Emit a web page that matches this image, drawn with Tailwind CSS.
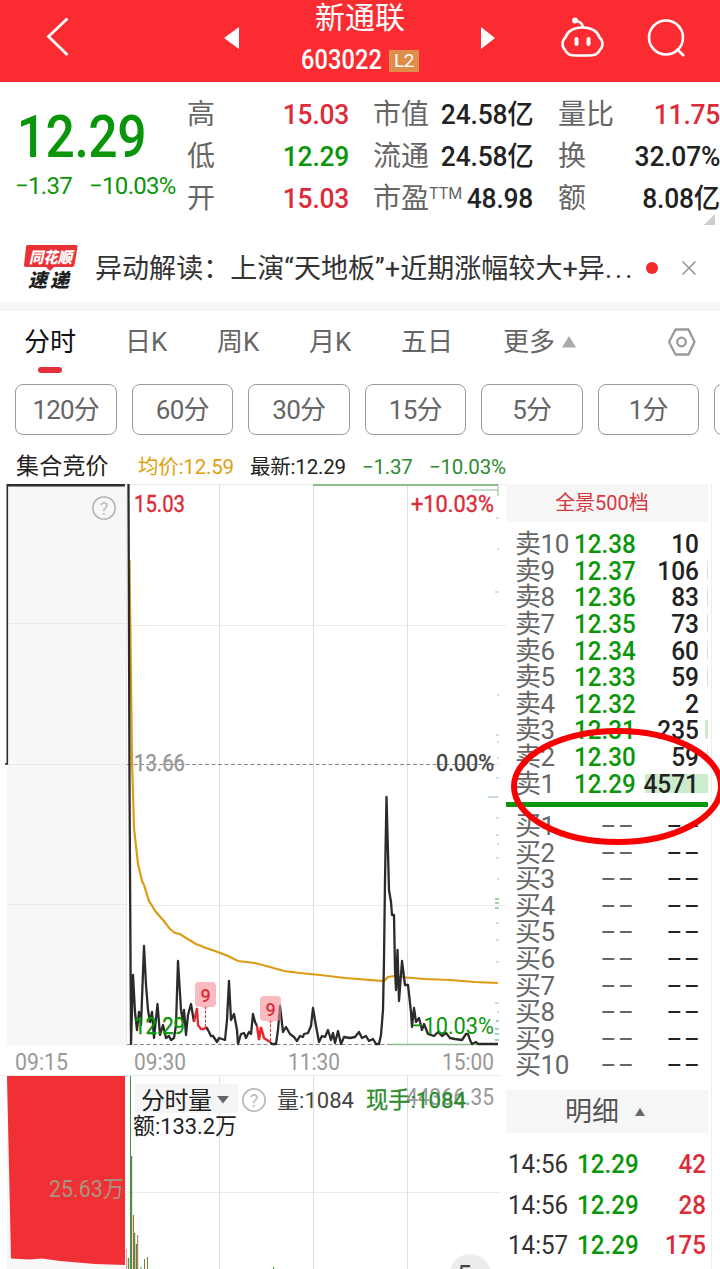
<!DOCTYPE html>
<html lang="zh-CN">
<head>
    <meta charset="UTF-8">
    <meta name="viewport" content="width=device-width, initial-scale=1.0">
    <title>新通联 603022</title>
    <script src="https://cdn.jsdelivr.net/npm/@tailwindcss/browser@4"></script>
</head>
<body class="bg-white font-['Roboto','Noto_Sans_CJK_SC',sans-serif] text-[#333]">
<div class="relative w-[720px] h-[1269px] overflow-hidden flex flex-col">

    <!-- Header -->
    <header class="h-[82px] shrink-0 bg-[#fa2c32] text-white flex items-start">
        <svg class="w-[222px] h-[82px]" viewBox="0 0 222 82" fill="none" stroke="#fff" stroke-width="2.8"><path d="M67.500 18.500L48.500 36.500L67.500 55"/></svg>
        <svg class="w-[18px] h-[82px]" viewBox="0 0 18 82"><path d="M17 27V49L2 38Z" fill="#fff"/></svg>
        <div class="w-[240px] h-[82px] flex flex-col items-center">
            <h1 class="h-[36px] leading-[35px] text-[30px]">新通联</h1>
            <div class="h-[46px] flex items-center pt-[3px]">
                <span class="w-[88px] text-[27px] font-medium tracking-[0.2px] origin-left scale-x-[0.87]">603022</span>
                <span class="w-[30px] h-[22px] leading-[22px] bg-[#e08c4b] text-[19px] text-center tracking-[-0.5px]">L2</span>
            </div>
        </div>
        <svg class="w-[16px] h-[82px]" viewBox="0 0 16 82"><path d="M1 27V49L15 38Z" fill="#fff"/></svg>
        <svg class="w-[224px] h-[82px]" viewBox="496 0 224 82" fill="none" stroke="#fff" stroke-width="2.600">
            <path d="M582.500 27.500C573 27.500 567 32 565.500 37.500C562 40 561.500 46.500 564.500 49C567 54.500 570 55.500 576 55.500H588C595 55.500 598 54.500 600.500 49C603.500 46.500 603 40 599.500 37.500C598 32 592 27.500 582.500 27.500Z"/>
            <path d="M583 27C582 23 579.500 21 575 21"/>
            <circle cx="575" cy="20.500" r="1.600" fill="#fff"/>
            <path d="M576.500 39V44M588.500 39V44" stroke-width="4" stroke-linecap="round"/>
            <circle cx="666" cy="37.500" r="17"/>
            <path d="M677 49L684 56"/>
        </svg>
    </header>

    <!-- Quote -->
    <section class="h-[153px] shrink-0 flex">
        <div class="w-[187px] text-[#0a960a]">
            <div class="mt-[27px] pl-[19px] h-[56px] leading-[56px] text-[59px] font-medium tracking-[-0.5px] origin-left scale-x-[0.875]">12.29</div>
            <div class="mt-[8px] pl-[15px] h-[26px] leading-[26px] text-[24px] flex gap-[17px] tracking-[-0.7px]"><span>−1.37</span><span>−10.03%</span></div>
        </div>
        <div class="w-[533px] pt-[12px] flex text-[28px] leading-[42px]">
            <div id="stats1" class="w-[162px]"></div>
            <div id="stats2" class="w-[160px] ml-[24px]"></div>
            <div id="stats3" class="w-[162px] ml-[25px]"></div>
        </div>
    </section>

    <!-- News -->
    <section class="h-[67px] shrink-0 flex items-center border-b border-[#f6f6f6]">
        <svg class="w-[95px] h-[66px] shrink-0" viewBox="0 236 95 66">
            <path d="M27.500 246H76Q78 246 77.500 248L74.500 266Q74 268 72 268H54L50 272L46 268H26Q23.500 268 24 266L26 248Q26 246 27.500 246Z" fill="#e83238"/>
            <text x="29" y="263.500" font-size="15.500" font-weight="900" font-style="italic" fill="#fff" textLength="43" lengthAdjust="spacingAndGlyphs">同花顺</text>
            <text x="28" y="288" font-size="19" font-weight="900" font-style="italic" fill="#222" textLength="41">速递</text>
        </svg>
        <p class="w-[551px] pt-[2px] text-[27px] tracking-[0.05px] whitespace-nowrap">异动解读：上演“天地板”+近期涨幅较大+异<span class="tracking-[3px]">...</span></p>
        <span class="w-[12px] h-[12px] rounded-full bg-[#f52b2b]"></span>
        <svg class="w-[16px] h-[16px] ml-[23px]" viewBox="0 0 16 16" stroke="#999" stroke-width="1.700"><path d="M1.500 1.500L14.500 14.500M14.500 1.500L1.500 14.500"/></svg>
    </section>
    <div class="h-[8px] shrink-0 bg-[#f5f5f5] mt-[1px]"></div>

    <!-- Tabs -->
    <nav class="h-[73px] shrink-0 flex pl-[24px] pt-[11px] text-[26px] leading-[41px] text-[#666]">
        <div class="w-[101px] text-[#111]">
            分时
            <div class="w-[24px] h-[6px] mt-[4px] ml-[14px] rounded-full bg-[#e5303a]"></div>
        </div>
        <div class="w-[92px]">日K</div>
        <div class="w-[92px]">周K</div>
        <div class="w-[92px]">月K</div>
        <div class="w-[102px]">五日</div>
        <div class="w-[163px] flex">更多
            <svg class="w-[16px] h-[40px] ml-[6px]" viewBox="0 0 16 40"><path d="M1 25.500L8 14L15 25.500Z" fill="#aaa"/></svg>
        </div>
        <svg class="w-[32px] h-[40px]" viewBox="0 0 32 40" fill="none" stroke="#999" stroke-width="2.300" stroke-linejoin="round"><path d="M9.500 7.500H22.500L28.500 20L22.500 32.500H9.500L3 20Z"/><circle cx="15.500" cy="20" r="4.300"/></svg>
    </nav>
    <div id="periods" class="h-[51px] shrink-0 flex gap-[15px] pl-[15px] text-[26px] text-[#666]"></div>

    <!-- Average and last price -->
    <div class="h-[49px] shrink-0 flex items-center pl-[16px] pt-[15px] text-[20.500px] whitespace-nowrap tracking-[-0.2px]">
        <span class="w-[122px] text-[23px] tracking-[0.2px] text-[#222]">集合竞价</span>
        <span class="w-[112px] text-[#e0a010]">均价:12.59</span>
        <span class="w-[112px] text-[#222]">最新:12.29</span>
        <span class="w-[67px] text-[#2c8c2c]">−1.37</span>
        <span class="text-[#2c8c2c]">−10.03%</span>
    </div>

    <main class="flex h-[785px] shrink-0">
        <!-- Time-share chart -->
        <svg class="w-[506px] h-[785px] shrink-0" viewBox="0 484 506 785" fill="none">
            <rect x="7" y="484" width="119" height="561" fill="#f7f7f7"/>
            <path d="M7 623.500H126M7 764.500H126M7 904.500H126" stroke="#eaeaea"/>
            <path d="M126.500 484.500H506M129 625.500H506M129 905.500H506M126.500 484V1045M0 1075.500H500M126 1192.500H500" stroke="#ebebeb"/>
            <path d="M219.500 484V1045M313.500 484V1045M407.500 484V1045M219.500 1076V1269M313.500 1076V1269M407.500 1076V1269" stroke="#dedede"/>
            <path d="M127 764.500H498M127 1044.500H498" stroke="#888" stroke-dasharray="4 2.500"/>
            <path d="M390 1044.500H478" stroke="#8cbd8c" stroke-width="1.500"/>
            <path d="M313 485H498" stroke="#8cbd8c" stroke-width="2"/>
            <path d="M472 490H498M488 797H498M498 485V496" stroke="#8cbd8c"/>
            <path d="M496 518H499M497 549H499M495 592H499M497 695H499M496 735H499M497 742H499M497 758H499M496 778H499M496 818H499M496 835H499M497 844H499M496 858H499M497 879H499M496 923H499M496 940H499M496 962H499M495 1003H499M497 1012H499" stroke="#bbb"/>
            <path d="M495 899H499M495 903H499M495 908H499M496 1021H499M495 1029H499M495 1034H499M495 1040H499" stroke="#9fd4a8" stroke-width="2"/>

            <!-- Price labels under the curve -->
            <g>
                <text x="134" y="512" font-size="24" fill="#dc2c3a" textLength="51" lengthAdjust="spacingAndGlyphs" stroke="#dc2c3a" stroke-width=".4">15.03</text>
                <text x="411" y="512" font-size="24" fill="#dc2c3a" textLength="83" lengthAdjust="spacingAndGlyphs" stroke="#dc2c3a" stroke-width=".4">+10.03%</text>
                <text x="134" y="771" font-size="24" fill="#999" textLength="51" lengthAdjust="spacingAndGlyphs" stroke="#999" stroke-width=".4">13.66</text>
                <text x="436" y="771" font-size="24" fill="#444" textLength="58" lengthAdjust="spacingAndGlyphs" stroke="#444" stroke-width=".4">0.00%</text>
            </g>
            <polyline stroke="#dc9c14" stroke-width="2.200" points="129.500,560 131,680 132,760 134,828 138,864 142,881 144,885 149,901 156,912 163,920 170,929 175,933 180,934 186,938 196,944 206,948 215,951 228,956 238,961 255,963 270,967 284,971 300,973 320,975 345,978 384,981 388,977 394,976 400,977 425,979 450,980 475,982 498,983"/>
            <path d="M125 485.300H7" stroke="#2b2b2b" stroke-width="2.500"/>
            <path d="M7.300 484V764H5" stroke="#2b2b2b" stroke-width="1.600"/>
            <g stroke="#2b2b2b" stroke-width="2.300" stroke-linejoin="round">
                <polyline points="128.500,484 129.500,780 131,1044 133,975 135,1012 137,1030 139,1012 141,1025 144,946 146,985 148,1010 150,1022 152,1012 154,1038 157.500,1004 160,1035 163,1025 166,1038 169,1036 171,1040 174,1038 176,1025 178,961 181,1010 183,1022 184,1010 186,1035 188,1015 191,1004 194,1022"/>
                <polyline points="206,1027 208,1030 211,1036 213,1036 217,1042 219,1038 225,1040 227,1020 229,981 231,1020 234,1014 237,1030 238,1044 241,1034 244,1033 246,1038 249,1032 251,1034 253,1014 255,1022 257,1026"/>
                <polyline points="270,1042 272,1044 276,1044 278,1030 280,1006 283,1032 286,1027 290,1034 294,1037 297,1041 300,1036 303,1037 304,1034 308,1033 311,1026 313,1008 316,1026 319,1042 322,1036 325,1037 328,1030 331,1040 333,1033 335,1043 338,1031 341,1044 344,1037 350,1038 355,1037 359,1032 362,1038 366,1036 369,1041 373,1039 376,1044 379,1044 381,1035 383,1010 384,960 385,880 386.500,797 389,890 391,902 392,915 394,915 395,970 396,990 397.500,950 399,1001 402,961 405,985 408,985 411,1012 412,1027 414,1008 416,1022 419,1018 422,1030 424,1024 428,1034 434,1036 438,1032 442,1036 446,1033 450,1038 455,1039 462,1040 466,1034 468,1034 470,1040 472,1044 476,1042 478,1044 498,1044"/>
            </g>
            <polyline stroke="#e8282f" stroke-width="2.300" points="194,1022 197,1008 198,1025 201,1029 204,1029 206,1027"/>
            <polyline stroke="#e8282f" stroke-width="2.500" points="257,1026 259,1040 261,1027 264,1038 267,1040 270,1042"/>
            <path d="M205.500 1006V1028M270.500 1020V1042" stroke="#d33" stroke-dasharray="3 1.500"/>

            <!-- Nine-turn markers -->
            <path d="M199 982H212Q216 982 216 986V1003Q216 1007 212 1007H209L205.500 1010L202 1007H199Q195 1007 195 1003V986Q195 982 199 982Z" fill="#f58c96" fill-opacity=".6"/>
            <path d="M264 996H277Q281 996 281 1000V1017Q281 1021 277 1021H274L270.500 1024L267 1021H264Q260 1021 260 1017V1000Q260 996 264 996Z" fill="#f58c96" fill-opacity=".6"/>
            <g font-size="18" font-weight="500" fill="#dc2c3a" text-anchor="middle"><text x="205.500" y="1001.500">9</text><text x="270.500" y="1015.500">9</text></g>

            <g font-size="24" fill="#0a960a">
                <text x="134" y="1034" textLength="51" lengthAdjust="spacingAndGlyphs" stroke="#0a960a" stroke-width=".4">12.29</text>
                <text x="411" y="1034" textLength="83" lengthAdjust="spacingAndGlyphs">−10.03%</text>
            </g>
            <g font-size="24" fill="#999">
                <text x="15" y="1070" textLength="53" lengthAdjust="spacingAndGlyphs">09:15</text>
                <text x="134" y="1070" textLength="52" lengthAdjust="spacingAndGlyphs">09:30</text>
                <text x="288" y="1070" textLength="52" lengthAdjust="spacingAndGlyphs">11:30</text>
                <text x="442" y="1070" textLength="52" lengthAdjust="spacingAndGlyphs">15:00</text>
            </g>
            <circle cx="104" cy="508" r="11.200" stroke="#bbb" stroke-width="1.700"/>
            <text x="104" y="514.500" font-size="18" fill="#bbb" text-anchor="middle">?</text>

            <!-- Volume -->
            <rect x="7" y="1076" width="119" height="193" fill="#f7f7f7"/>
            <path d="M7 1076H125V1265L95 1264L60 1261L42 1258.500L30 1259.500L11 1258.500Z" fill="#f03034"/>
            <path d="M126.500 1249V1269" stroke="#f0a0a0"/>
            <path d="M128.500 1258V1269M131.500 1156V1269M134.500 1233V1269M136.500 1244V1269" stroke="#5a8a46" stroke-width="1.400"/>
            <path d="M130.500 1076V1269M147.500 1257V1269M141 1267V1269M273.500 1267V1269" stroke="#3a9a3a"/>
            <path d="M133.500 1215V1269M137.700 1235V1269M144.500 1259V1269" stroke="#b85c40"/>
            <text x="49" y="1197" font-size="23" fill="#a89484" textLength="75" lengthAdjust="spacingAndGlyphs">25.63万</text>
            <rect x="135" y="1084" width="103" height="29" fill="#f6f5f6"/>
            <text x="141" y="1108.500" font-size="24" fill="#222" textLength="71">分时量</text>
            <path d="M217 1096H229L223 1103.500Z" fill="#666"/>
            <circle cx="254" cy="1100" r="11.200" stroke="#bbb" stroke-width="1.700"/>
            <text x="254" y="1106.500" font-size="18" fill="#bbb" text-anchor="middle">?</text>
            <text x="277" y="1108" font-size="22.500" fill="#444" textLength="77" lengthAdjust="spacingAndGlyphs">量:1084</text>
            <text x="406" y="1104.500" font-size="24" fill="#999" textLength="88" lengthAdjust="spacingAndGlyphs">44366.35</text>
            <text x="366" y="1108" font-size="22.500" fill="#2c8c2c" stroke="#2c8c2c" stroke-width=".3" textLength="100" lengthAdjust="spacingAndGlyphs">现手:1084</text>
            <text x="133" y="1133.500" font-size="22.500" fill="#222" textLength="104" lengthAdjust="spacingAndGlyphs">额:133.2万</text>
            <circle cx="470" cy="1275" r="21" fill="#ededed"/>
            <text x="457" y="1284" font-size="26" fill="#444">5</text>
        </svg>

        <!-- Order book -->
        <aside class="w-[206px] h-[785px] border-r border-[#eee]">
            <div class="w-[202px] h-[38px] bg-[#f6f6f6] text-[#d8363f] text-[20px] leading-[39px] text-center pr-[10px]">全景500档</div>
            <div id="sells" class="mt-[9px] w-[202px] h-[267px]"></div>
            <div class="w-[202px] h-[5px] mt-[4px] bg-[#0a960a]"></div>
            <div id="buys" class="mt-[6px] w-[202px] h-[266px]"></div>
            <div class="w-[202px] h-[43px] mt-[11px] bg-[#f6f6f6] text-[#555] text-[27px] flex items-center justify-center pt-[2px] pr-[3px]">
                明细
                <svg class="w-[12px] h-[10px] ml-[15px] mb-[2px]" viewBox="0 0 12 10"><path d="M1 9L6 1L11 9Z" fill="#666"/></svg>
            </div>
            <div id="trades" class="w-[202px] pt-[11px]"></div>
        </aside>
    </main>

    <!-- Corner mark and hand-drawn circle -->
    <svg class="absolute inset-0 w-[720px] h-[1269px]" viewBox="0 0 720 1269" fill="none">
        <path d="M715 214V225H704Z" fill="#ccc"/>
        <ellipse cx="617.500" cy="786.500" rx="103.500" ry="55.500" stroke="#f80000" stroke-width="6"/>
    </svg>
</div>

<script>
    const stats = {
        stats1: [["高", "15.03", "text-[#dc2c3a]"], ["低", "12.29", "text-[#0a960a]"], ["开", "15.03", "text-[#dc2c3a]"]],
        stats2: [["市值", "24.58亿", "text-[#222]"], ["流通", "24.58亿", "text-[#222]"], ["市盈", "48.98", "text-[#222]"]],
        stats3: [["量比", "11.75", "text-[#dc2c3a]"], ["换", "32.07%", "text-[#222]"], ["额", "8.08亿", "text-[#222]"]]
    };
    for (const id in stats) {
        document.getElementById(id).innerHTML = stats[id].map(([label, value, color]) => `
            <div class="h-[42px] flex justify-between whitespace-nowrap">
                <span class="text-[#666] flex">${label}${label === "市盈" ? '<span class="text-[16px] leading-[32px]">TTM</span>' : ""}</span>
                <span class="text-[27.500px] font-medium tracking-[-0.2px] origin-right scale-x-[0.96] ${color}">${value}</span>
            </div>`).join("");
    }

    document.getElementById("periods").innerHTML = ["120分", "60分", "30分", "15分", "5分", "1分", ""].map(p => `
        <div class="w-[101.500px] h-[51px] shrink-0 border border-[#999] rounded-[8px] leading-[51px] text-center tracking-[-0.8px]">${p}</div>`).join("");

    // [level, price, quantity, depth bar width]
    const sells = [
        [10, "12.38", "10", 0], [9, "12.37", "106", 1], [8, "12.36", "83", 1], [7, "12.35", "73", 1], [6, "12.34", "60", 1],
        [5, "12.33", "59", 1], [4, "12.32", "2", 0], [3, "12.31", "235", 3], [2, "12.30", "59", 1], [1, "12.29", "4571", 63]
    ];
    document.getElementById("sells").innerHTML = sells.map(([n, price, qty, w]) => `
        <div class="relative h-[26.650px] leading-[26.650px] flex text-[26px] pl-[9px] whitespace-nowrap">
            <div class="absolute right-0 top-[3px] h-[19px] bg-[#cdebcd]" style="width:${w}px"></div>
            <span class="w-[59px] text-[#666] tracking-[-0.4px]">卖${n}</span>
            <span class="w-[62px] font-medium text-[#0a960a] origin-left scale-x-[0.93]">${price}</span>
            <span class="relative w-[63px] text-right font-medium text-[#222] origin-right scale-x-[0.94]">${qty}</span>
        </div>`).join("");

    document.getElementById("buys").innerHTML = [1, 2, 3, 4, 5, 6, 7, 8, 9, 10].map(n => `
        <div class="h-[26.600px] leading-[26.600px] flex text-[26px] pl-[9px] whitespace-nowrap">
            <span class="w-[59px] text-[#666] tracking-[-0.4px]">买${n}</span>
            <span class="w-[62px] text-right"><span class="inline-block origin-right -translate-y-px scale-x-[1.9] tracking-[2px] text-[#666]">--</span></span>
            <span class="w-[66px] text-right"><span class="inline-block origin-right -translate-y-px scale-x-[1.9] tracking-[2px] text-[#222]">--</span></span>
        </div>`).join("");

    document.getElementById("trades").innerHTML = [["14:56", "12.29", "42"], ["14:56", "12.29", "28"], ["14:57", "12.29", "175"]].map(([time, price, qty]) => `
        <div class="h-[40.500px] leading-[40.500px] flex text-[26px] font-medium pl-[2px]">
            <span class="w-[69px] font-normal text-[#333] origin-left scale-x-[0.93]">${time}</span>
            <span class="w-[66px] text-[#0a960a] origin-left scale-x-[0.93]">${price}</span>
            <span class="w-[63px] text-right text-[#dc2c3a] origin-right scale-x-[0.93]">${qty}</span>
        </div>`).join("");
</script>
</body>
</html>
